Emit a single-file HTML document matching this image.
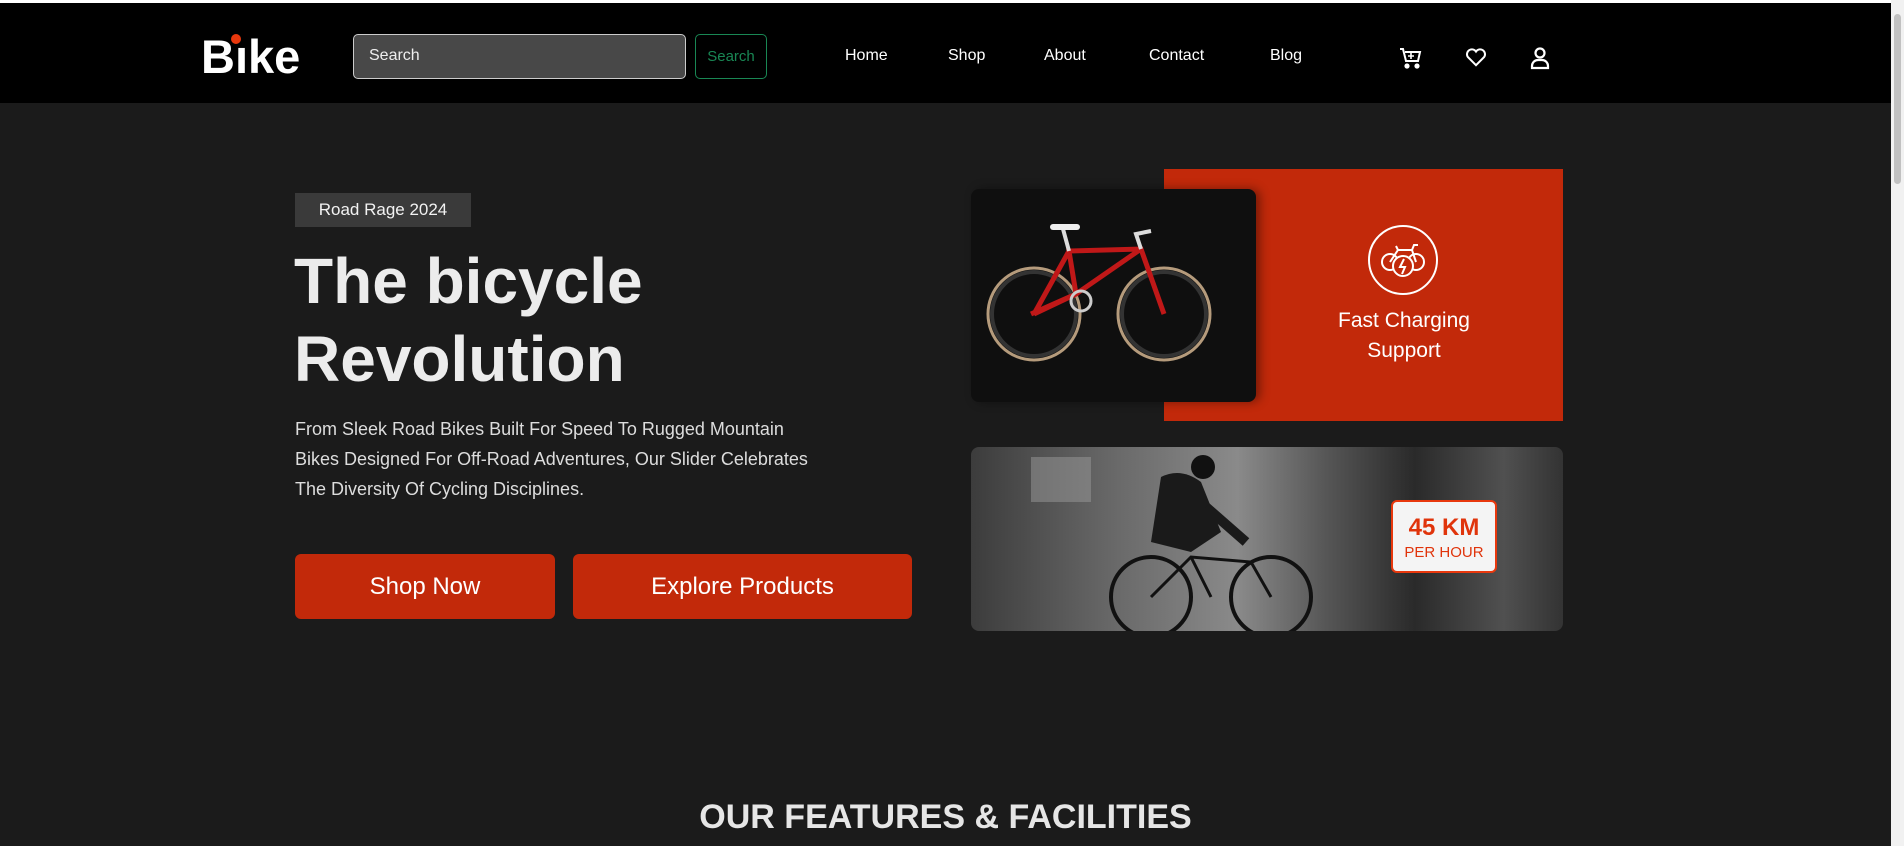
<!DOCTYPE html>
<html><head><meta charset="utf-8"><style>
*{margin:0;padding:0;box-sizing:border-box}
body{width:1904px;height:846px;overflow:hidden;background:#1b1b1b;font-family:"Liberation Sans",sans-serif;position:relative;color:#fff}
.top{position:absolute;left:0;top:0;width:1891px;height:3px;background:#fff}
.hdr{position:absolute;left:0;top:3px;width:1891px;height:100px;background:#000}
.sb{position:absolute;right:0;top:0;width:13px;height:846px;background:#f1f1f1}
.sb div{position:absolute;left:3px;top:14px;width:7px;height:170px;background:#c1c1c1;border-radius:4px}
.abs{position:absolute}
.logo{left:201px;top:30px;font-size:47px;font-weight:bold;line-height:54px}
.dot{left:231px;top:34px;width:10px;height:10px;border-radius:50%;background:#e8380d}
.inp{left:353px;top:34px;width:333px;height:45px;background:#484848;border:1px solid #ccc;border-radius:5px;font-size:16px;padding:12px 15px;color:#eee}
.btn{left:695px;top:34px;width:72px;height:45px;border:1px solid #198754;border-radius:5px;color:#198754;font-size:15px;text-align:center;line-height:43px}
.nav{top:47px;font-size:16px}
.badge{left:295px;top:193px;width:176px;height:34px;background:#3a3a3a;font-size:17px;text-align:center;line-height:34px;color:#f2f2f2}
h1{position:absolute;left:294px;top:242px;font-size:64px;line-height:78px;font-weight:bold;color:#ececec}
p.d{position:absolute;left:295px;top:414px;width:525px;font-size:18px;line-height:30px;color:#ddd}
.b{top:554px;height:65px;background:#c2290a;border-radius:6px;font-size:24px;text-align:center;line-height:65px;color:#fff}
.red{left:1164px;top:169px;width:399px;height:252px;background:#c2290a}
.card{left:971px;top:189px;width:285px;height:213px;background:#0f0f0f;border-radius:8px;box-shadow:4px 0 10px rgba(0,0,0,.4)}
.fc{left:1264px;top:306px;width:280px;text-align:center;font-size:21px;line-height:30px}
.rider{left:971px;top:447px;width:592px;height:184px;border-radius:8px;overflow:hidden;background:linear-gradient(90deg,#3c3c3c,#6a6a6a 25%,#8a8a8a 45%,#565656 60%,#2a2a2a 75%,#505050 90%,#333)}
.km{left:1391px;top:500px;width:106px;height:73px;background:#f4f4f4;border:2px solid #e8380d;border-radius:6px;text-align:center;color:#e0340b}
.feat{left:0;width:1891px;top:798px;text-align:center;font-size:34px;font-weight:bold;color:#e6e6e6}
</style></head><body>
<div class="top"></div>
<div class="hdr"></div>
<div class="abs logo">Bık<span>e</span></div><div class="abs dot"></div>
<div class="abs inp">Search</div>
<div class="abs btn">Search</div>
<div class="abs nav" style="left:845px">Home</div>
<div class="abs nav" style="left:948px">Shop</div>
<div class="abs nav" style="left:1044px">About</div>
<div class="abs nav" style="left:1149px">Contact</div>
<div class="abs nav" style="left:1270px">Blog</div>
<svg class="abs" style="left:1399px;top:46px" width="24" height="24" viewBox="0 0 24 24" fill="none" stroke="#fff" stroke-width="2"><path d="M1 3h3l3 12h12l2-9H6"/><path d="M12 7v6M9 10h6" stroke-width="1.6"/><circle cx="8" cy="20" r="1.6" fill="#fff"/><circle cx="18" cy="20" r="1.6" fill="#fff"/></svg>
<svg class="abs" style="left:1465px;top:47px" width="22" height="20" viewBox="0 0 24 22" fill="none" stroke="#fff" stroke-width="2.2"><path d="M12 20 3 11a5 5 0 0 1 9-6 5 5 0 0 1 9 6z"/></svg>
<svg class="abs" style="left:1530px;top:46px" width="20" height="24" viewBox="0 0 20 24" fill="none" stroke="#fff" stroke-width="2.2"><circle cx="10" cy="7" r="4.5"/><path d="M2 22v-2a6 6 0 0 1 6-6h4a6 6 0 0 1 6 6v2z"/></svg>
<div class="sb"><div></div></div>

<div class="abs badge">Road Rage 2024</div>
<h1>The bicycle<br>Revolution</h1>
<p class="d">From Sleek Road Bikes Built For Speed To Rugged Mountain Bikes Designed For Off-Road Adventures, Our Slider Celebrates The Diversity Of Cycling Disciplines.</p>
<div class="abs b" style="left:295px;width:260px">Shop Now</div>
<div class="abs b" style="left:573px;width:339px">Explore Products</div>

<div class="abs red"></div>
<div class="abs card">
<svg width="285" height="213" viewBox="0 0 285 213" fill="none">
<circle cx="63" cy="125" r="46" stroke="#b59b7c" stroke-width="3"/><circle cx="63" cy="125" r="42" stroke="#333" stroke-width="4"/>
<circle cx="193" cy="125" r="46" stroke="#b59b7c" stroke-width="3"/><circle cx="193" cy="125" r="42" stroke="#333" stroke-width="4"/>
<path d="M63 125 L105 105 L98 62 L170 60 L193 125 M105 105 L170 60 M63 125 L98 62 M105 105 L60 125" stroke="#c01818" stroke-width="5"/>
<path d="M98 62 L92 40 M170 60 L165 45 L180 42" stroke="#ddd" stroke-width="4"/>
<path d="M82 38 h24" stroke="#eee" stroke-width="6" stroke-linecap="round"/>
<circle cx="110" cy="112" r="10" stroke="#ccc" stroke-width="3"/>
</svg></div>
<svg class="abs" style="left:1367px;top:224px" width="72" height="72" viewBox="0 0 72 72" fill="none" stroke="#fff" stroke-width="2"><circle cx="36" cy="36" r="34"/><circle cx="23" cy="38" r="8"/><circle cx="49" cy="38" r="8"/><path d="M23 38l8-12h14l4 12M31 26l-2-4M45 26l2-5h4"/><circle cx="36" cy="42" r="10" fill="#c2290a"/><path d="M37 35l-4 8h5l-3 7" /></svg>
<div class="abs fc">Fast Charging<br>Support</div>
<div class="abs rider">
<svg width="592" height="184" viewBox="0 0 592 184" fill="none">
<rect x="60" y="10" width="60" height="45" fill="#9a9a9a" opacity=".5"/>
<circle cx="180" cy="150" r="40" stroke="#111" stroke-width="4"/><circle cx="300" cy="150" r="40" stroke="#111" stroke-width="4"/>
<path d="M180 150l40-40 60 5 20 35M220 110l20 40" stroke="#111" stroke-width="3"/>
<path d="M190 30 q20-10 40 5 l20 50 -30 20 -40-10z" fill="#1a1a1a"/>
<circle cx="232" cy="20" r="12" fill="#111"/>
<path d="M235 60l40 35" stroke="#1a1a1a" stroke-width="10"/>
</svg></div>
<div class="abs km"><div style="font-size:24px;font-weight:bold;margin-top:12px">45 KM</div><div style="font-size:15px;margin-top:2px">PER HOUR</div></div>
<div class="abs feat">OUR FEATURES &amp; FACILITIES</div>
</body></html>
